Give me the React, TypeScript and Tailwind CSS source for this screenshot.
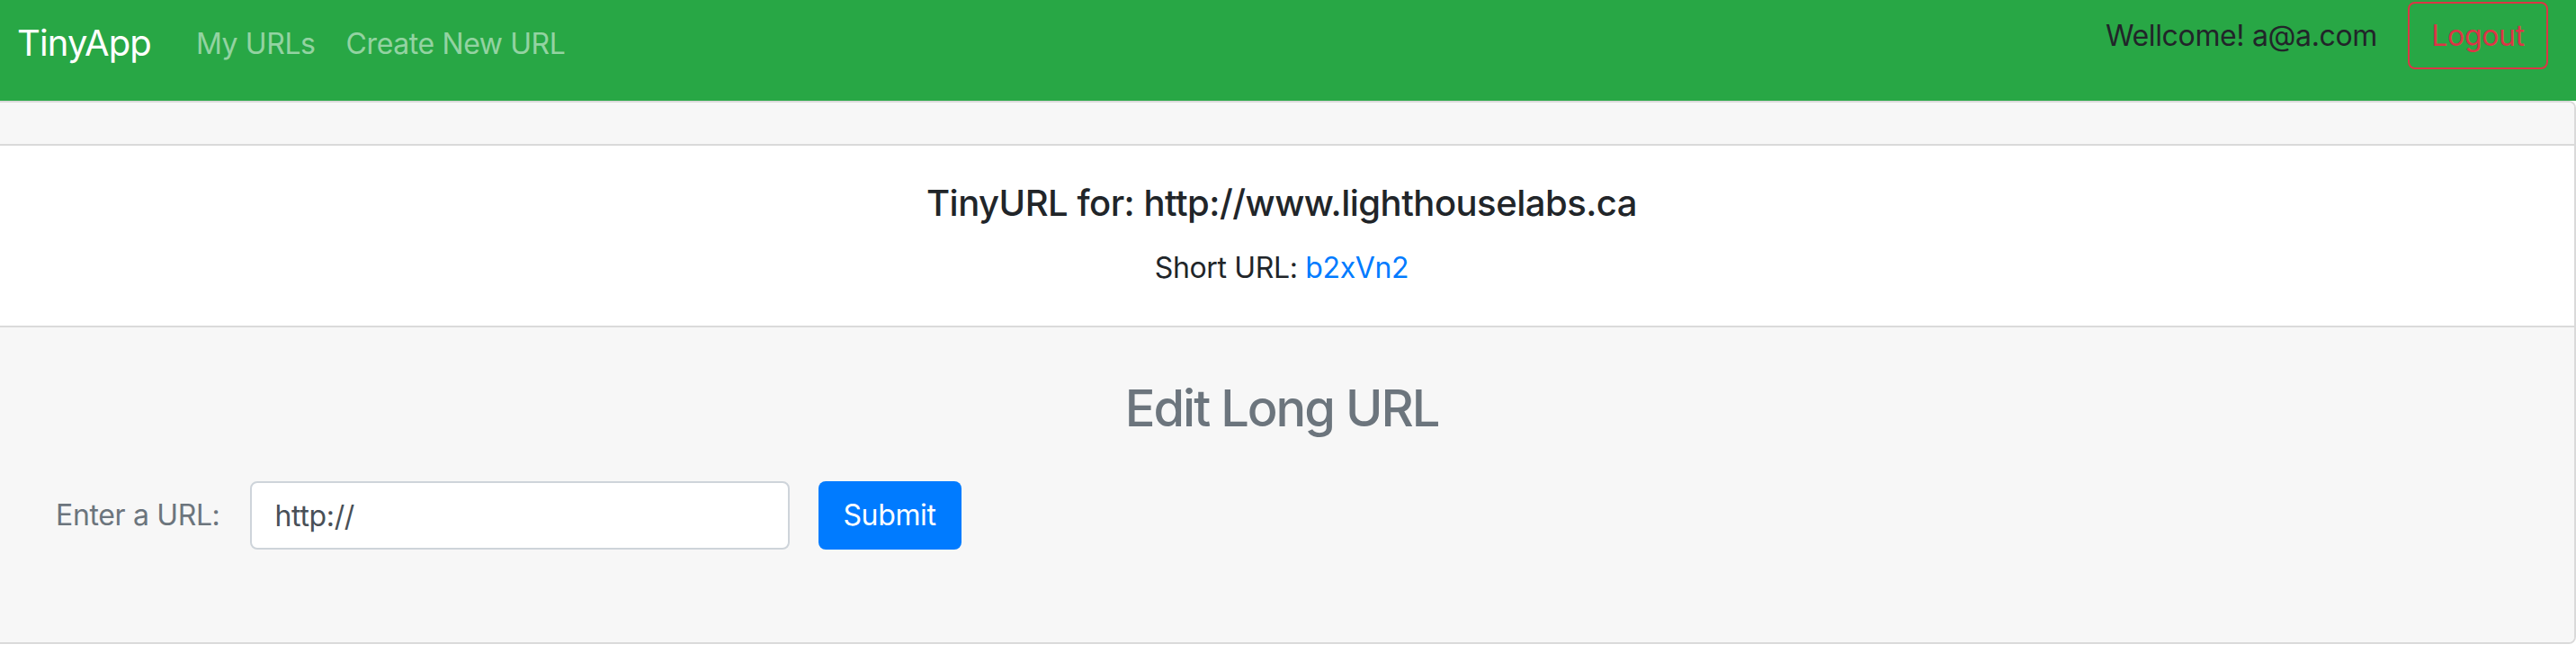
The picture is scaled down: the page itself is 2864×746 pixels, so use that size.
import React from 'react';

const App: React.FC = () => {
  return (
    <div className="min-h-[746px] bg-white text-[#212529]" style={{ fontFamily: 'Inter, "Liberation Sans", sans-serif' }}>
      {/* navbar */}
      <nav className="h-[112px] bg-[#28a745] flex items-start">
        <a className="ml-[19px] mt-[18px] text-[40px] leading-[60px] tracking-[-0.85px] text-white">TinyApp</a>
        <div className="flex items-start mt-[25px] ml-[50px] gap-[34px] text-[32px] leading-[48px] tracking-[-0.4px] text-white/50">
          <a>My URLs</a>
          <a>Create New URL</a>
        </div>
        <div className="ml-auto mr-[31px] flex items-start">
          <span className="mt-[16px] text-[32px] leading-[48px] tracking-[-0.35px] text-[#212529]">Wellcome! a@a.com</span>
          <button className="ml-[34px] mt-[2px] h-[75px] w-[156px] border-2 border-[#dc3545] rounded-[8px] text-[32px] leading-[48px] tracking-[-0.35px] text-[#dc3545]">
            Logout
          </button>
        </div>
      </nav>

      {/* card */}
      <div className="border-y-2 border-r-2 border-[#dadada] rounded-r-[8px] overflow-hidden">
        <div className="h-[48px] bg-[#f7f7f7] border-b-2 border-[#dadada]"></div>
        <div className="bg-white pt-[40px] pb-[40px] pr-[12px] text-center">
          <h5 className="text-[40px] leading-[48px] font-medium tracking-[-0.5px] mb-[24px]">
            TinyURL for: http://www.lighthouselabs.ca
          </h5>
          <p className="text-[32px] leading-[48px] tracking-[-0.35px]">
            Short URL: <a className="text-[#007bff]">b2xVn2</a>
          </p>
        </div>
        <div className="bg-[#f7f7f7] border-t-2 border-[#dadada] pt-[57px] pb-[103px]">
          <h3 className="pr-[12px] text-center text-[56px] leading-[67px] font-medium tracking-[-2px] text-[#6c757d]">
            Edit Long URL
          </h3>
          <form className="mt-[47px] flex items-center pl-[62px] tracking-[-0.35px]" onSubmit={(e) => e.preventDefault()}>
            <label className="text-[32px] leading-[48px] text-[#6c757d]">Enter a URL:</label>
            <input
              type="text"
              defaultValue="http://"
              className="ml-[33px] w-[600px] h-[76px] px-[26px] bg-white border-2 border-[#ced4da] rounded-[8px] text-[32px] text-[#495057] outline-none"
            />
            <button
              type="submit"
              className="ml-[32px] w-[159px] h-[76px] bg-[#007bff] rounded-[8px] text-[32px] leading-[48px] text-white"
            >
              Submit
            </button>
          </form>
        </div>
      </div>
    </div>
  );
};

export default App;
